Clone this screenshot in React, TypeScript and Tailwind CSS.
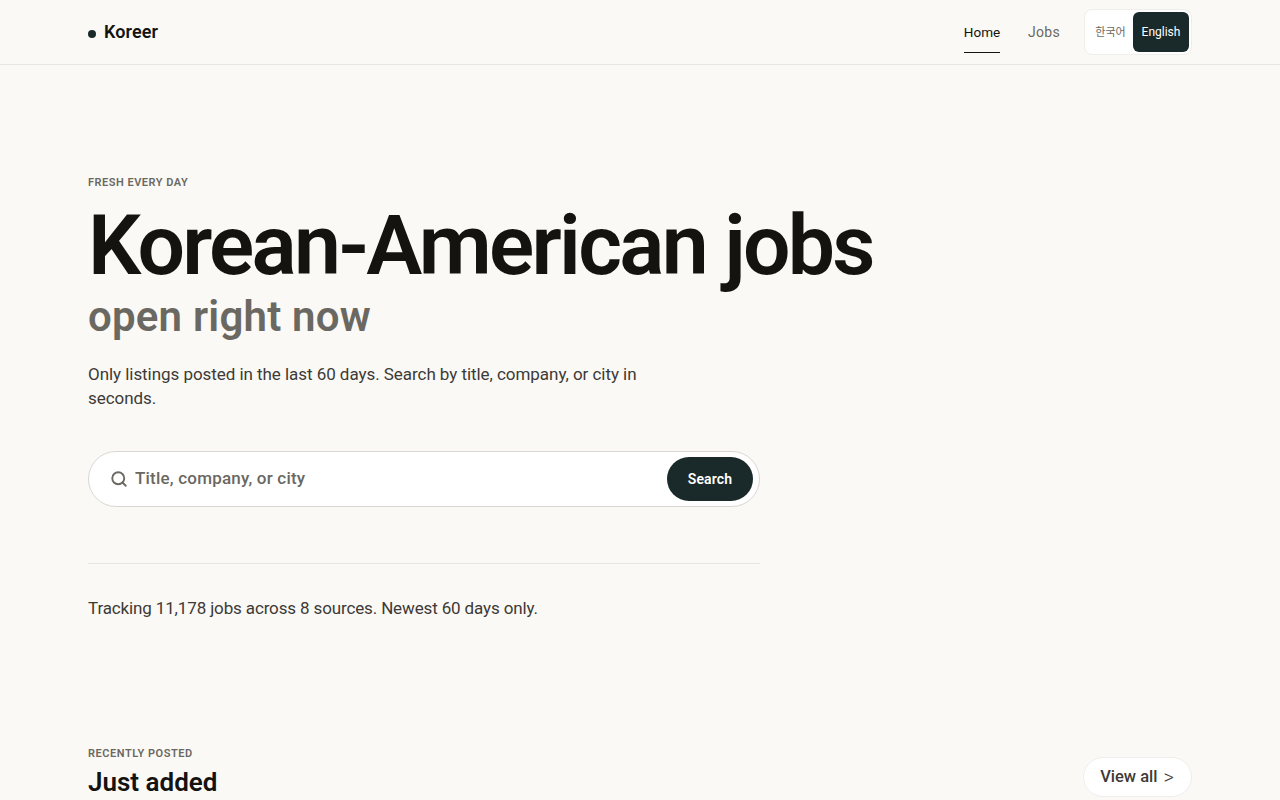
import { Search } from "lucide-react";

function Header() {
    return (
        <header className="h-[65px] border-b border-[#e8e6e1]">
            <div className="mx-auto flex h-full w-[1104px] items-center justify-between">
                <div className="flex items-center gap-2">
                    <span className="mt-[3px] h-2 w-2 rounded-full bg-[#1a2a2a]" />
                    <span className="mb-[1px] text-[18px] font-semibold tracking-[0.005em] text-[#141310]">Koreer</span>
                </div>
                <div className="flex h-full items-center">
                    <nav className="flex h-full items-center gap-7 text-[13.5px]">
                        <a className="mt-[1px] flex h-10 w-9 items-center justify-center border-b border-[#141310] text-[#141310]">Home</a>
                        <a className="mt-[1px] flex h-10 w-8 items-center justify-center text-[14px] tracking-[0.02em] text-[#6b6862]">Jobs</a>
                    </nav>
                    <div className="ml-6 flex h-[46px] w-[108px] items-center justify-between rounded-lg border border-[#f0eeea] bg-white p-[2px] text-[12px]">
                        <button className="mt-[2px] h-10 w-[46px] pl-[1px] text-[11px] text-[#6b6862]">한국어</button>
                        <button className="h-10 w-14 rounded-md bg-[#1a2a2a] text-white">English</button>
                    </div>
                </div>
            </div>
        </header>
    );
}

function Hero() {
    return (
        <section className="mx-auto w-[1104px] pt-[111px]">
            <p className="mt-[1px] text-[11px] leading-3 font-semibold tracking-[0.045em] text-[#6b6862]">FRESH EVERY DAY</p>
            <h1 className="mt-[15px] text-[84px] leading-[84px] font-semibold tracking-[-0.032em] text-[#141310]">Korean-American jobs</h1>
            <p className="mt-[5px] text-[42px] leading-[48px] font-semibold tracking-[0.005em] text-[#6b6862]">open right now</p>
            <p className="mt-[21px] w-[600px] text-[17px] leading-6 tracking-[-0.003em] text-[#3d3a35]">
                Only listings posted in the last 60 days. Search by title, company, or city in seconds.
            </p>
            <form className="mt-[41px] flex h-14 w-[672px] items-center rounded-full border border-[#d9d7d2] bg-white pr-[6px] pl-[21px]">
                <Search className="h-[18px] w-[18px] text-[#6b6862]" strokeWidth={2.5} />
                <span className="ml-[7px] flex-1 text-[17px] font-medium tracking-[0.012em] text-[#6b6862]">Title, company, or city</span>
                <button type="button" className="h-11 w-[86px] rounded-full bg-[#1a2a2a] text-[14px] font-semibold tracking-[0.01em] text-white">Search</button>
            </form>
            <div className="mt-14 w-[672px] border-t border-[#e8e6e1] pt-[32px] text-[17px] leading-6 tracking-[-0.008em] text-[#3d3a35]">
                Tracking 11,178 jobs across 8 sources. Newest 60 days only.
            </div>
        </section>
    );
}

function JustAdded() {
    return (
        <section className="mx-auto mt-[127px] flex h-[60px] w-[1104px] items-start justify-between">
            <div>
                <p className="mt-[1px] text-[11px] leading-3 font-semibold tracking-[0.05em] text-[#6b6862]">RECENTLY POSTED</p>
                <h2 className="mt-[8px] text-[26px] leading-7 font-semibold text-[#141310]">Just added</h2>
            </div>
            <a className="mt-[10px] flex h-10 w-[109px] items-center justify-center gap-[6px] rounded-full border border-[#f0eeea] bg-white pr-[1px] text-[16.5px] font-medium text-[#3d3a35]">
                View all <span className="text-[20px] font-light text-[#3d3a35]">&gt;</span>
            </a>
        </section>
    );
}

export default function App() {
    return (
        <div className="h-[800px] overflow-hidden bg-[#faf9f6]" style={{ fontFamily: "Roboto, 'Noto Sans CJK KR', sans-serif" }}>
            <Header />
            <Hero />
            <JustAdded />
        </div>
    );
}
